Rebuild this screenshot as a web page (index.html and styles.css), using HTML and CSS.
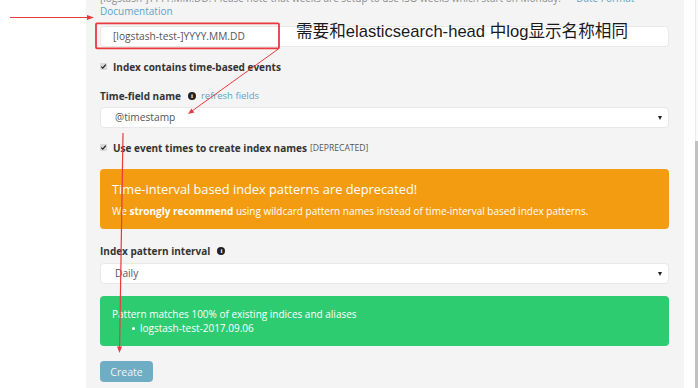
FILE: index.html
```html
<!DOCTYPE html>
<html>
<head>
<meta charset="utf-8">
<link rel="stylesheet" href="styles.css">
</head>
<body>
<div class="page">
  <div class="gutter"></div>
  <main class="panel">
    <p class="help">[logstash-]YYYY.MM.DD. Please note that weeks are setup to use ISO weeks which start on Monday. — <a class="link">Date Format</a><br><a class="link">Documentation</a></p>
    <div class="input">[logstash-test-]YYYY.MM.DD</div>
    <div class="check"><svg class="cb" width="7" height="7" viewBox="0 0 7 7"><rect x="0" y="0" width="7" height="7" rx="1" fill="#d9d9d9"/><path d="M1.3 3.6 L2.8 5.1 L5.8 1.6" stroke="#222" stroke-width="1.3" fill="none"/></svg>Index contains time-based events</div>
    <div class="label">Time-field name <span class="info">i</span> <a class="link small">refresh fields</a></div>
    <div class="select">@timestamp<span class="caret"></span></div>
    <div class="check"><svg class="cb" width="7" height="7" viewBox="0 0 7 7"><rect x="0" y="0" width="7" height="7" rx="1" fill="#d9d9d9"/><path d="M1.3 3.6 L2.8 5.1 L5.8 1.6" stroke="#222" stroke-width="1.3" fill="none"/></svg>Use event times to create index names <span class="dep">[DEPRECATED]</span></div>
    <div class="alert warn">
      <h4 class="alert-title">Time-interval based index patterns are deprecated!</h4>
      <p class="alert-body">We <b>strongly recommend</b> using wildcard pattern names instead of time-interval based index patterns.</p>
    </div>
    <div class="label label2">Index pattern interval <span class="info">i</span></div>
    <div class="select select2">Daily<span class="caret"></span></div>
    <div class="alert ok">
      <p class="ok-line">Pattern matches 100% of existing indices and aliases</p>
      <ul class="ok-list"><li>logstash-test-2017.09.06</li></ul>
    </div>
    <button class="btn">Create</button>
  </main>
  <div class="gap"></div>
  <div class="scroll"><div class="thumb"></div></div>
</div>
<div class="note">需要和elasticsearch-head 中log显示名称相同</div>
<svg class="marks" width="698" height="388" viewBox="0 0 698 388">
  <g stroke="#e83a3f" fill="none">
    <line x1="10" y1="17.5" x2="89" y2="17.5" stroke-width="1"/>
    <rect x="96" y="23.3" width="183" height="25" stroke-width="1.8" rx="1"/>
    <line x1="279" y1="48.5" x2="192" y2="111" stroke-width="1"/>
    <line x1="123" y1="133" x2="119.6" y2="348" stroke-width="1.2"/>
  </g>
  <g fill="#e83a3f">
    <polygon points="94,17.5 87,15 87,20"/>
    <polygon points="188,114 194.3,112.5 191.4,108.4"/>
    <polygon points="119.5,353 117,346.5 122,346.5"/>
  </g>
</svg>
</body>
</html>
```
FILE: styles.css
```css
* { box-sizing: border-box; }
html, body { margin: 0; padding: 0; background: #fff; }
body {
  width: 698px;
  height: 388px;
  overflow: hidden;
  position: relative;
  font-family: "Open Sans", "Liberation Sans", sans-serif;
  color: #333;
}
.page { display: flex; height: 388px; }
.gutter { width: 86px; flex: none; background: #fff; }
.panel {
  width: 598px;
  flex: none;
  background: #f4f4f4;
  padding: 0 15px 0 14px;
  display: flex;
  flex-direction: column;
  align-items: stretch;
}
.gap { width: 11px; flex: none; background: #fff; }
.scroll {
  width: 3px;
  flex: none;
  background: #fafafa;
  border-left: 1px solid #ececec;
  display: flex;
  flex-direction: column;
}
.thumb { margin-top: 141px; flex: 1; background: #c1c1c1; margin-left: -1px; }

.help {
  margin: -8px 0 0 0;
  font-size: 10px;
  line-height: 13px;
  color: #8c8c8c;
  white-space: nowrap;
}
.link { color: #5fa2c6; text-decoration: none; }
.link.small { font-size: 9.5px; font-weight: 400; margin-left: 5px; }

.input, .select {
  height: 21px;
  background: #fff;
  border: 1px solid #e8e8e8;
  border-radius: 4px;
  font-size: 10.2px;
  line-height: 19px;
  color: #555;
}
.input { margin-top: 8px; padding-left: 12px; }
.select {
  margin-top: 4px;
  padding-left: 14px;
  display: flex;
  align-items: center;
  justify-content: space-between;
  padding-right: 6px;
}
.select2 { margin-top: 5px; }
.caret {
  width: 0; height: 0;
  border-left: 2.5px solid transparent;
  border-right: 2.5px solid transparent;
  border-top: 4px solid #222;
}

.check {
  margin-top: 13px;
  height: 14px;
  line-height: 14px;
  font-size: 10px;
  font-weight: 700;
  color: #333;
  display: flex;
  align-items: center;
}
.cb { margin-right: 6px; flex: none; margin-top: -1px; }
.dep { font-weight: 400; font-size: 8.6px; color: #555; margin-left: 3px; }

.label {
  margin-top: 15px;
  height: 14px;
  line-height: 14px;
  font-size: 10px;
  font-weight: 700;
  color: #333;
  display: flex;
  align-items: center;
}
.info {
  display: inline-flex;
  align-items: center;
  justify-content: center;
  width: 8px; height: 8px;
  border-radius: 50%;
  background: #222;
  color: #fff;
  font-size: 7px;
  font-weight: 700;
  line-height: 8px;
  margin-left: 7px;
  font-family: "Liberation Serif", serif;
}

.alert { border-radius: 4px; color: #fff; padding: 11px 12px 10px; }
.warn { background: #f39c12; margin-top: 14px; height: 60px; }
.alert-title { margin: 0; font-size: 12.8px; line-height: 18px; font-weight: 400; }
.alert-body { margin: 5px 0 0; font-size: 10px; line-height: 16px; }
.alert-body b { font-weight: 700; }

.ok { background: #2ecc71; margin-top: 12px; height: 50px; padding: 11px 12px; }
.ok-line { margin: 0; font-size: 10px; line-height: 14px; }
.ok-list { margin: 0; padding-left: 28px; font-size: 10px; line-height: 14px; list-style: none; }
.ok-list li { position: relative; }
.ok-list li::before {
  content: "";
  position: absolute;
  left: -8px;
  top: 6px;
  width: 3px;
  height: 3px;
  border-radius: 50%;
  background: #fff;
}

.btn {
  margin-top: 15px;
  align-self: flex-start;
  width: 53px;
  height: 21px;
  border: none;
  border-radius: 4px;
  background: #6eadc3;
  color: #eef6f9;
  font-family: "Open Sans", "Liberation Sans", sans-serif;
  font-size: 10.5px;
  padding: 0;
}

.note {
  position: absolute;
  left: 296px;
  top: 22px;
  font-family: "Liberation Sans", "Noto Sans CJK SC", sans-serif;
  font-size: 16.6px;
  line-height: 20px;
  color: #1a1a1a;
  white-space: nowrap;
}
.marks { position: absolute; left: 0; top: 0; pointer-events: none; }
```
